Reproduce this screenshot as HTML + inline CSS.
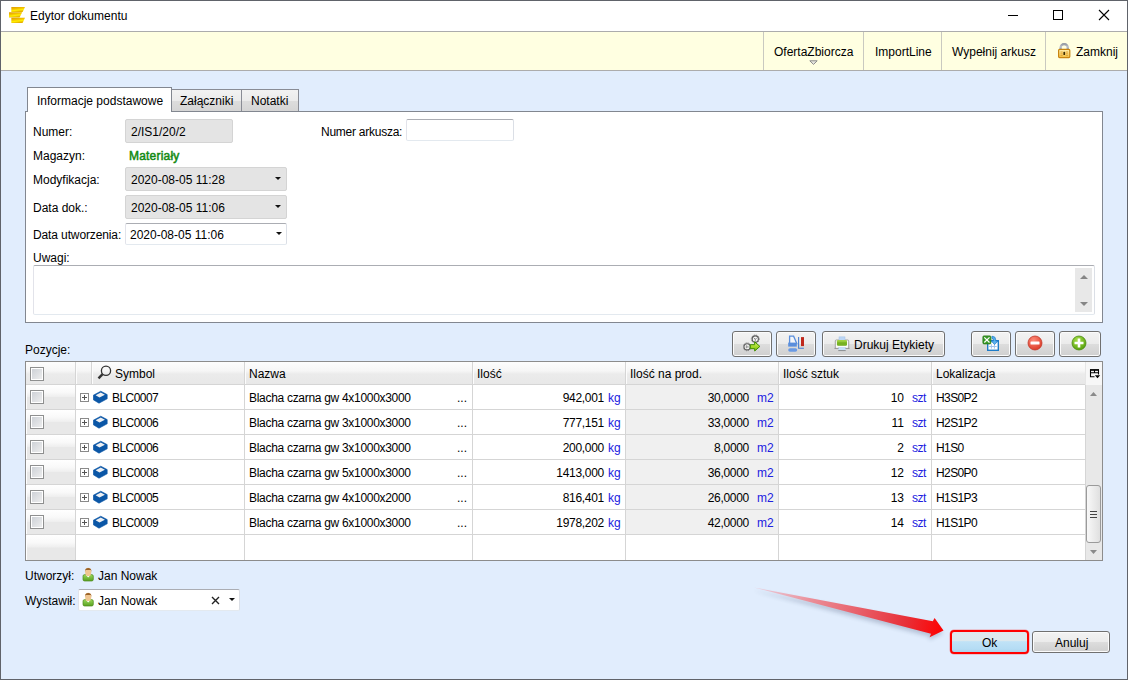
<!DOCTYPE html>
<html><head><meta charset="utf-8"><style>
*{box-sizing:border-box;margin:0;padding:0}
html,body{width:1128px;height:680px;overflow:hidden;background:#e1edfd}
body{position:relative;font-family:"Liberation Sans",sans-serif;font-size:12px;color:#000}
.a{position:absolute}
.t{position:absolute;white-space:nowrap;font-size:12px;line-height:14px;height:14px}
.r{text-align:right}
.win{left:0;top:0;width:1128px;height:680px;border:1px solid #60636a;background:#e1edfd}
.title{left:1px;top:1px;width:1126px;height:30px;background:#fff}
.tb{left:1px;top:31px;width:1126px;height:40px;background:#ffffe1;border-top:1px solid #acacac;border-bottom:1px solid #acacac}
.sep{top:32px;width:1px;height:38px;background:#c9c9c0}
.panel{left:25px;top:111px;width:1078px;height:212px;background:#fff;border:1px solid #828790}
.tabsel{left:27px;top:87px;width:145px;height:25px;background:#fff;border:1px solid #828790;border-bottom:none;z-index:2}
.tab{top:89px;height:22px;border:1px solid #898c95;border-bottom:none;background:linear-gradient(#f2f2f2 0,#ebebeb 50%,#dddddd 51%,#d5d5d5 100%)}
.ro{background:#e4e4e4;border:1px solid #d4d4d4;border-radius:2px}
.tbx{background:#fff;border:1px solid #abadb3;border-bottom-color:#e3e9ef;border-left-color:#e2e3ea;border-right-color:#dbdfe6;border-radius:2px}
.dd{width:0;height:0;border-left:3px solid transparent;border-right:3px solid transparent;border-top:3px solid #111}
.btn{border:1px solid #707070;border-radius:3px;background:linear-gradient(#f3f3f3 0,#ebebeb 50%,#dddddd 51%,#cfcfcf 100%);box-shadow:inset 0 0 0 1px #fbfbfb}
.grid{left:25px;top:361px;width:1078px;height:200px;background:#fff;border:1px solid #8c8c8c}
.hdr{background:linear-gradient(#fdfdfd 0,#f6f6f6 40%,#ebebeb 55%,#e8e8e8 100%)}
.ind{background:linear-gradient(#ffffff 0,#f9f9f9 30%,#efefef 48%,#e8e8e8 52%,#e8e8e8 100%)}
.vl{width:1px;background:#d5d5d5}
.hl{height:1px;background:#d5d5d5}
.cb{width:14px;height:14px;border:1px solid #8e8f8f;background:linear-gradient(135deg,#cbcfd5 0,#f0f0f0 100%);box-shadow:inset 0 0 0 1px #fff}
.u{color:#2020e0}
</style></head><body>
<div class="a win"></div><div class="a title"></div>
<svg class="a" style="left:6px;top:4px" width="24" height="24" viewBox="0 0 24 24">
 <defs><linearGradient id="gold" x1="0" y1="0" x2="0.35" y2="1"><stop offset="0" stop-color="#dc9a00"/><stop offset=".45" stop-color="#f5c400"/><stop offset=".7" stop-color="#fff000"/><stop offset="1" stop-color="#e6b000"/></linearGradient></defs>
 <path d="M5.3 3H19L16.6 8H5.3z" fill="url(#gold)"/>
 <path d="M3 8.3H16.2L13.6 13.4H3z" fill="url(#gold)"/>
 <path d="M5.3 13.8H19L16.6 19H5.3z" fill="url(#gold)"/>
</svg>
<div class="t" style="left:30px;top:9px;color:#000">Edytor dokumentu</div>
<div class="a " style="left:1008px;top:15px;width:10px;height:1px;background:#000"></div>
<div class="a " style="left:1053px;top:10px;width:10px;height:10px;border:1px solid #000"></div>
<svg class="a" style="left:1098px;top:9px" width="12" height="12" viewBox="0 0 12 12"><path d="M1 1L11 11M11 1L1 11" stroke="#000" stroke-width="1.1"/></svg>
<div class="a tb"></div>
<div class="a sep" style="left:763px;top:32px;width:1px;height:38px;"></div>
<div class="a sep" style="left:863px;top:32px;width:1px;height:38px;"></div>
<div class="a sep" style="left:941px;top:32px;width:1px;height:38px;"></div>
<div class="a sep" style="left:1045px;top:32px;width:1px;height:38px;"></div>
<div class="t" style="left:774px;top:45px;">OfertaZbiorcza</div>
<svg class="a" style="left:809px;top:60px" width="9" height="5" viewBox="0 0 9 5"><path d="M0.8 0.8h7.4L4.5 4.4z" fill="#e8e8e0" stroke="#8a8a8a" stroke-width="1"/></svg>
<div class="t" style="left:875px;top:45px;">ImportLine</div>
<div class="t" style="left:952px;top:45px;">Wypełnij arkusz</div>
<svg class="a" style="left:1052px;top:38px" width="24" height="24" viewBox="0 0 24 24">
 <defs><linearGradient id="shk" x1="0" y1="0" x2="0" y2="1"><stop offset="0" stop-color="#8a8f98"/><stop offset=".5" stop-color="#e8eaee"/><stop offset="1" stop-color="#6f8fc0"/></linearGradient>
 <linearGradient id="lkb" x1="0" y1="0" x2="0" y2="1"><stop offset="0" stop-color="#fff0b0"/><stop offset="1" stop-color="#f2c040"/></linearGradient></defs>
 <path d="M8.6 11.5V9.8a3.6 3.6 0 0 1 7.2 0V11.5" fill="none" stroke="url(#shk)" stroke-width="2.2"/>
 <path d="M8.6 11.5V9.8a3.6 3.6 0 0 1 7.2 0V11.5" fill="none" stroke="#a0a6b0" stroke-width="2.2" opacity="0.6"/>
 <rect x="6.6" y="11.4" width="11.2" height="8.2" rx="1" fill="url(#lkb)" stroke="#c88410" stroke-width="1.2"/>
 <path d="M8.5 14h2.2M8.5 15.8h2.2M8.5 17.6h2.2M13.8 14h2.2M13.8 15.8h2.2M13.8 17.6h2.2" stroke="#e0a030" stroke-width="0.9"/>
 <rect x="11.4" y="13.8" width="1.7" height="3.2" rx="0.6" fill="#3a2a00"/>
</svg>
<div class="t" style="left:1076px;top:45px;">Zamknij</div>
<div class="a panel"></div><div class="a tabsel"></div>
<div class="t" style="left:37px;top:94px;z-index:3">Informacje podstawowe</div>
<div class="a tab" style="left:171px;top:89px;width:71px;height:22px;"></div>
<div class="t" style="left:180px;top:94px;">Załączniki</div>
<div class="a tab" style="left:241px;top:89px;width:58px;height:22px;"></div>
<div class="t" style="left:251px;top:94px;">Notatki</div>
<div class="t" style="left:33px;top:125px;">Numer:</div>
<div class="a ro" style="left:125px;top:119px;width:108px;height:24px;"></div>
<div class="t" style="left:131px;top:125px;">2/IS1/20/2</div>
<div class="t" style="left:321px;top:125px;letter-spacing:-0.25px">Numer arkusza:</div>
<div class="a tbx" style="left:406px;top:119px;width:108px;height:22px;"></div>
<div class="t" style="left:33px;top:149px;">Magazyn:</div>
<div class="t" style="left:129px;top:149px;color:#128a12;-webkit-text-stroke:0.5px #128a12;letter-spacing:0.2px">Materiały</div>
<div class="t" style="left:33px;top:173px;">Modyfikacja:</div>
<div class="a ro" style="left:125px;top:167px;width:162px;height:24px;"></div>
<div class="t" style="left:131px;top:173px;">2020-08-05 11:28</div>
<div class="a dd" style="left:275px;top:177px;width:0px;height:0px;"></div>
<div class="t" style="left:33px;top:201px;">Data dok.:</div>
<div class="a ro" style="left:125px;top:195px;width:162px;height:24px;"></div>
<div class="t" style="left:131px;top:201px;">2020-08-05 11:06</div>
<div class="a dd" style="left:275px;top:205px;width:0px;height:0px;"></div>
<div class="t" style="left:33px;top:228px;letter-spacing:-0.12px">Data utworzenia:</div>
<div class="a tbx" style="left:125px;top:223px;width:162px;height:22px;"></div>
<div class="t" style="left:130px;top:228px;">2020-08-05 11:06</div>
<div class="a dd" style="left:276px;top:232px;width:0px;height:0px;"></div>
<div class="t" style="left:33px;top:251px;">Uwagi:</div>
<div class="a tbx" style="left:33px;top:265px;width:1062px;height:50px;"></div>
<div class="a " style="left:1075px;top:268px;width:17px;height:44px;background:#e8e8e8"></div>
<div class="a " style="left:1080px;top:275px;width:0px;height:0px;border-left:4px solid transparent;border-right:4px solid transparent;border-bottom:4px solid #858585"></div>
<div class="a " style="left:1080px;top:302px;width:0px;height:0px;border-left:4px solid transparent;border-right:4px solid transparent;border-top:4px solid #858585"></div>
<div class="t" style="left:25px;top:343px;">Pozycje:</div>
<div class="a btn" style="left:732px;top:331px;width:40px;height:26px;"></div>
<div class="a btn" style="left:776px;top:331px;width:40px;height:26px;"></div>
<div class="a btn" style="left:822px;top:331px;width:123px;height:26px;"></div>
<div class="a btn" style="left:971px;top:331px;width:40px;height:26px;"></div>
<div class="a btn" style="left:1015px;top:331px;width:40px;height:26px;"></div>
<div class="a btn" style="left:1059px;top:331px;width:42px;height:26px;"></div>
<svg class="a" style="left:743px;top:334px" width="20" height="20" viewBox="0 0 20 20">
 <defs><linearGradient id="ga" x1="0" y1="0" x2="0" y2="1"><stop offset="0" stop-color="#d8f860"/><stop offset="1" stop-color="#78c000"/></linearGradient></defs>
 <circle cx="12.3" cy="5" r="4" fill="none" stroke="#888" stroke-width="1" stroke-dasharray="1.1 1"/>
 <circle cx="12.3" cy="5" r="3.1" fill="#f6f6f6" stroke="#5a5a5a" stroke-width="1.1"/>
 <path d="M10.8 3.8l1.5 1.6 1.5-1.6M12.3 5.4v1.4" fill="none" stroke="#666" stroke-width="0.8"/>
 <circle cx="4.1" cy="12.8" r="4" fill="none" stroke="#888" stroke-width="1" stroke-dasharray="1.1 1"/>
 <circle cx="4.1" cy="12.8" r="3.1" fill="#f6f6f6" stroke="#5a5a5a" stroke-width="1.1"/>
 <path d="M3.3 11.3v3M4.9 11.8v2" stroke="#666" stroke-width="0.8"/>
 <path d="M7.3 10.7H11.7V7.8L16.9 12.4 11.7 17V14.7H7.3Z" fill="url(#ga)" stroke="#3f8c00" stroke-width="1"/>
</svg>
<svg class="a" style="left:787px;top:335px" width="20" height="18" viewBox="0 0 20 18">
 <path d="M2.6 1.2H6.6L9.8 8.6H2.6Z" fill="#f4f6fa" stroke="#5a8edc" stroke-width="1.3"/>
 <rect x="1.2" y="7.6" width="8.6" height="4" fill="#5a8edc"/>
 <rect x="1.2" y="13.2" width="9" height="3.6" rx="1.8" fill="#6a9ae4"/>
 <path d="M11.6 2.1V13.3H16.9" fill="none" stroke="#4a7fd0" stroke-width="1.1"/>
 <rect x="14" y="2.1" width="3" height="9" fill="#c0281c"/>
</svg>
<svg class="a" style="left:834px;top:336px" width="16" height="16" viewBox="0 0 16 16">
 <defs><linearGradient id="gp" x1="0" y1="0" x2="0" y2="1"><stop offset="0" stop-color="#a8d848"/><stop offset="1" stop-color="#6aa818"/></linearGradient></defs>
 <path d="M1.3 12.4V5Q1.3 4 2.3 4H13.7Q14.7 4 14.7 5V12.4" fill="#fafafa" stroke="#9a9a9a" stroke-width="0.9"/>
 <path d="M0.5 12.4H15.5" stroke="#8a8a8a" stroke-width="0.9"/>
 <rect x="5" y="0.9" width="6" height="4.6" fill="#bcd6f5" stroke="#a0c0e8" stroke-width="0.5"/>
 <rect x="2.9" y="3.9" width="10.1" height="5.9" rx="1.3" fill="url(#gp)"/>
 <path d="M3.3 7h9.4" stroke="#5a9a10" stroke-width="0.6"/>
 <rect x="4" y="11.8" width="8" height="0.9" fill="#444"/>
 <rect x="4.3" y="11.2" width="7.4" height="3.2" fill="#c6e0fa"/>
 <path d="M4.3 14.6H11.7" stroke="#777" stroke-width="0.8"/>
</svg>
<div class="t" style="left:854px;top:338px;">Drukuj Etykiety</div>
<svg class="a" style="left:982px;top:335px" width="18" height="17" viewBox="0 0 18 17">
 <rect x="5.7" y="5.7" width="10.6" height="9.6" fill="#fff" stroke="#1e7cc8" stroke-width="1.4"/>
 <path d="M9.4 9.2v4.4M12.4 9.2v4.4M7.1 11.5h7.6" stroke="#a0c4ec" stroke-width="1"/>
 <rect x="0.9" y="0.9" width="8" height="8" rx="1" fill="#3a9a28" stroke="#2a7a18" stroke-width="0.8"/>
 <path d="M2.3 2.3L7.5 7.5M7.5 2.3L2.3 7.5" stroke="#fff" stroke-width="1.2"/>
 <path d="M10 1.2Q13.8 1.2 13.8 5V6H16L12.6 9.6 9.2 6H11.4V5Q11.4 3.4 10 3.4Z" fill="#5ab0ec" stroke="#1e7cc8" stroke-width="0.7"/>
</svg>
<svg class="a" style="left:1027px;top:335px" width="16" height="16" viewBox="0 0 16 16">
 <defs><radialGradient id="rg" cx=".4" cy=".3" r=".8"><stop offset="0" stop-color="#ff8a78"/><stop offset="1" stop-color="#d8321e"/></radialGradient></defs>
 <circle cx="8" cy="8" r="7" fill="url(#rg)" stroke="#c0392b" stroke-width="0.8"/>
 <rect x="3.5" y="6.5" width="9" height="3" rx="0.5" fill="#fff"/>
</svg>
<svg class="a" style="left:1071px;top:335px" width="16" height="16" viewBox="0 0 16 16">
 <defs><radialGradient id="gg" cx=".4" cy=".3" r=".8"><stop offset="0" stop-color="#a8e04a"/><stop offset="1" stop-color="#4e9a06"/></radialGradient></defs>
 <circle cx="8" cy="8" r="7" fill="url(#gg)" stroke="#4a8a10" stroke-width="0.8"/>
 <path d="M8 3.5v9M3.5 8h9" stroke="#fff" stroke-width="2.6"/>
</svg>
<div class="a grid"></div>
<div class="a hdr" style="left:26px;top:362px;width:1059px;height:22px;"></div>
<div class="a " style="left:1085px;top:362px;width:17px;height:23px;background:#f7f7f7"></div>
<div class="a hl" style="left:26px;top:384px;width:1059px;height:1px;"></div>
<div class="a vl" style="left:75px;top:362px;width:1px;height:22px;"></div>
<div class="a " style="left:76px;top:362px;width:1px;height:22px;background:#fcfcfc"></div>
<div class="a vl" style="left:91px;top:362px;width:1px;height:22px;"></div>
<div class="a " style="left:92px;top:362px;width:1px;height:22px;background:#fcfcfc"></div>
<div class="a vl" style="left:244px;top:362px;width:1px;height:22px;"></div>
<div class="a " style="left:245px;top:362px;width:1px;height:22px;background:#fcfcfc"></div>
<div class="a vl" style="left:472px;top:362px;width:1px;height:22px;"></div>
<div class="a " style="left:473px;top:362px;width:1px;height:22px;background:#fcfcfc"></div>
<div class="a vl" style="left:625px;top:362px;width:1px;height:22px;"></div>
<div class="a " style="left:626px;top:362px;width:1px;height:22px;background:#fcfcfc"></div>
<div class="a vl" style="left:778px;top:362px;width:1px;height:22px;"></div>
<div class="a " style="left:779px;top:362px;width:1px;height:22px;background:#fcfcfc"></div>
<div class="a vl" style="left:931px;top:362px;width:1px;height:22px;"></div>
<div class="a " style="left:932px;top:362px;width:1px;height:22px;background:#fcfcfc"></div>
<div class="a " style="left:1085px;top:362px;width:1px;height:23px;background:#e6e6e6"></div>
<div class="a cb" style="left:30px;top:367px;width:14px;height:14px;"></div>
<svg class="a" style="left:96px;top:364px" width="16" height="16" viewBox="0 0 16 16">
 <circle cx="10" cy="6.8" r="4.6" fill="none" stroke="#333" stroke-width="1.3"/>
 <path d="M6.6 10.2L2.5 14.3" stroke="#333" stroke-width="2.4"/>
</svg>
<div class="t" style="left:115px;top:367px;">Symbol</div>
<div class="t" style="left:249px;top:367px;">Nazwa</div>
<div class="t" style="left:477px;top:367px;">Ilość</div>
<div class="t" style="left:630px;top:367px;">Ilość na prod.</div>
<div class="t" style="left:783px;top:367px;">Ilość sztuk</div>
<div class="t" style="left:936px;top:367px;">Lokalizacja</div>
<svg class="a" style="left:1089px;top:369px" width="12" height="11" viewBox="0 0 12 11">
 <path d="M1.5 8.2V1H9.5V5.5M1.5 3.8H9.5M5.5 1V3.8M1.5 7.7H5.5" fill="none" stroke="#000" stroke-width="1.1"/>
 <path d="M1 0.9H10" stroke="#000" stroke-width="1.5"/>
 <path d="M5.8 6.2H11.2L8.5 9.2z" fill="#000"/>
</svg>
<div class="a ind" style="left:26px;top:385px;width:49px;height:24px;"></div>
<div class="a " style="left:26px;top:385px;width:1px;height:25px;background:#fff"></div>
<div class="a " style="left:626px;top:385px;width:152px;height:24px;background:#f0f0f0"></div>
<div class="a hl" style="left:26px;top:409px;width:1059px;height:1px;"></div>
<div class="a ind" style="left:26px;top:410px;width:49px;height:24px;"></div>
<div class="a " style="left:26px;top:410px;width:1px;height:25px;background:#fff"></div>
<div class="a " style="left:626px;top:410px;width:152px;height:24px;background:#f0f0f0"></div>
<div class="a hl" style="left:26px;top:434px;width:1059px;height:1px;"></div>
<div class="a ind" style="left:26px;top:435px;width:49px;height:24px;"></div>
<div class="a " style="left:26px;top:435px;width:1px;height:25px;background:#fff"></div>
<div class="a " style="left:626px;top:435px;width:152px;height:24px;background:#f0f0f0"></div>
<div class="a hl" style="left:26px;top:459px;width:1059px;height:1px;"></div>
<div class="a ind" style="left:26px;top:460px;width:49px;height:24px;"></div>
<div class="a " style="left:26px;top:460px;width:1px;height:25px;background:#fff"></div>
<div class="a " style="left:626px;top:460px;width:152px;height:24px;background:#f0f0f0"></div>
<div class="a hl" style="left:26px;top:484px;width:1059px;height:1px;"></div>
<div class="a ind" style="left:26px;top:485px;width:49px;height:24px;"></div>
<div class="a " style="left:26px;top:485px;width:1px;height:25px;background:#fff"></div>
<div class="a " style="left:626px;top:485px;width:152px;height:24px;background:#f0f0f0"></div>
<div class="a hl" style="left:26px;top:509px;width:1059px;height:1px;"></div>
<div class="a ind" style="left:26px;top:510px;width:49px;height:24px;"></div>
<div class="a " style="left:26px;top:510px;width:1px;height:25px;background:#fff"></div>
<div class="a " style="left:626px;top:510px;width:152px;height:24px;background:#f0f0f0"></div>
<div class="a hl" style="left:26px;top:534px;width:1059px;height:1px;"></div>
<div class="a ind" style="left:26px;top:535px;width:49px;height:25px;"></div>
<div class="a " style="left:26px;top:535px;width:1px;height:25px;background:#fff"></div>
<div class="a vl" style="left:75px;top:385px;width:1px;height:175px;"></div>
<div class="a vl" style="left:244px;top:385px;width:1px;height:175px;"></div>
<div class="a vl" style="left:472px;top:385px;width:1px;height:175px;"></div>
<div class="a vl" style="left:625px;top:385px;width:1px;height:175px;"></div>
<div class="a vl" style="left:778px;top:385px;width:1px;height:175px;"></div>
<div class="a vl" style="left:931px;top:385px;width:1px;height:175px;"></div>
<div class="a vl" style="left:1085px;top:385px;width:1px;height:175px;"></div>
<div class="a cb" style="left:30px;top:390px;width:14px;height:14px;"></div>
<svg class="a" style="left:80px;top:393px" width="9" height="9" viewBox="0 0 9 9"><rect x="0.5" y="0.5" width="8" height="8" fill="#fff" stroke="#8a8a8a"/><path d="M2 4.5h5M4.5 2v5" stroke="#555"/></svg>
<svg class="a" style="left:93px;top:390px" width="15" height="14" viewBox="0 0 15 14">
 <path d="M0.3 5.2L7.8 1.2 14.2 4.6V8.8L6 13.2 0.3 9.8z" fill="#0a56a6" stroke="#0a56a6" stroke-width="0.6" stroke-linejoin="round"/>
 <path d="M2.6 5.3L7.8 2.6 11.9 4.8 6.5 7.6z" fill="#eef0f3"/>
</svg>
<div class="t" style="left:112px;top:391px;letter-spacing:-0.55px">BLC0007</div>
<div class="t" style="left:249px;top:391px;letter-spacing:-0.3px">Blacha czarna gw 4x1000x3000</div>
<div class="t" style="left:457px;top:391px;">...</div>
<div class="t" style="right:524px;top:391px;text-align:right;letter-spacing:-0.3px">942,001</div>
<div class="t u" style="left:608px;top:391px;">kg</div>
<div class="t" style="right:379px;top:391px;text-align:right;letter-spacing:-0.3px">30,0000</div>
<div class="t u" style="left:757px;top:391px;">m2</div>
<div class="t" style="right:224px;top:391px;text-align:right;">10</div>
<div class="t u" style="left:912px;top:391px;letter-spacing:-0.5px">szt</div>
<div class="t" style="left:936px;top:391px;letter-spacing:-0.6px">H3S0P2</div>
<div class="a cb" style="left:30px;top:415px;width:14px;height:14px;"></div>
<svg class="a" style="left:80px;top:418px" width="9" height="9" viewBox="0 0 9 9"><rect x="0.5" y="0.5" width="8" height="8" fill="#fff" stroke="#8a8a8a"/><path d="M2 4.5h5M4.5 2v5" stroke="#555"/></svg>
<svg class="a" style="left:93px;top:415px" width="15" height="14" viewBox="0 0 15 14">
 <path d="M0.3 5.2L7.8 1.2 14.2 4.6V8.8L6 13.2 0.3 9.8z" fill="#0a56a6" stroke="#0a56a6" stroke-width="0.6" stroke-linejoin="round"/>
 <path d="M2.6 5.3L7.8 2.6 11.9 4.8 6.5 7.6z" fill="#eef0f3"/>
</svg>
<div class="t" style="left:112px;top:416px;letter-spacing:-0.55px">BLC0006</div>
<div class="t" style="left:249px;top:416px;letter-spacing:-0.3px">Blacha czarna gw 3x1000x3000</div>
<div class="t" style="left:457px;top:416px;">...</div>
<div class="t" style="right:524px;top:416px;text-align:right;letter-spacing:-0.3px">777,151</div>
<div class="t u" style="left:608px;top:416px;">kg</div>
<div class="t" style="right:379px;top:416px;text-align:right;letter-spacing:-0.3px">33,0000</div>
<div class="t u" style="left:757px;top:416px;">m2</div>
<div class="t" style="right:224px;top:416px;text-align:right;">11</div>
<div class="t u" style="left:912px;top:416px;letter-spacing:-0.5px">szt</div>
<div class="t" style="left:936px;top:416px;letter-spacing:-0.6px">H2S1P2</div>
<div class="a cb" style="left:30px;top:440px;width:14px;height:14px;"></div>
<svg class="a" style="left:80px;top:443px" width="9" height="9" viewBox="0 0 9 9"><rect x="0.5" y="0.5" width="8" height="8" fill="#fff" stroke="#8a8a8a"/><path d="M2 4.5h5M4.5 2v5" stroke="#555"/></svg>
<svg class="a" style="left:93px;top:440px" width="15" height="14" viewBox="0 0 15 14">
 <path d="M0.3 5.2L7.8 1.2 14.2 4.6V8.8L6 13.2 0.3 9.8z" fill="#0a56a6" stroke="#0a56a6" stroke-width="0.6" stroke-linejoin="round"/>
 <path d="M2.6 5.3L7.8 2.6 11.9 4.8 6.5 7.6z" fill="#eef0f3"/>
</svg>
<div class="t" style="left:112px;top:441px;letter-spacing:-0.55px">BLC0006</div>
<div class="t" style="left:249px;top:441px;letter-spacing:-0.3px">Blacha czarna gw 3x1000x3000</div>
<div class="t" style="left:457px;top:441px;">...</div>
<div class="t" style="right:524px;top:441px;text-align:right;letter-spacing:-0.3px">200,000</div>
<div class="t u" style="left:608px;top:441px;">kg</div>
<div class="t" style="right:379px;top:441px;text-align:right;letter-spacing:-0.3px">8,0000</div>
<div class="t u" style="left:757px;top:441px;">m2</div>
<div class="t" style="right:224px;top:441px;text-align:right;">2</div>
<div class="t u" style="left:912px;top:441px;letter-spacing:-0.5px">szt</div>
<div class="t" style="left:936px;top:441px;letter-spacing:-0.6px">H1S0</div>
<div class="a cb" style="left:30px;top:465px;width:14px;height:14px;"></div>
<svg class="a" style="left:80px;top:468px" width="9" height="9" viewBox="0 0 9 9"><rect x="0.5" y="0.5" width="8" height="8" fill="#fff" stroke="#8a8a8a"/><path d="M2 4.5h5M4.5 2v5" stroke="#555"/></svg>
<svg class="a" style="left:93px;top:465px" width="15" height="14" viewBox="0 0 15 14">
 <path d="M0.3 5.2L7.8 1.2 14.2 4.6V8.8L6 13.2 0.3 9.8z" fill="#0a56a6" stroke="#0a56a6" stroke-width="0.6" stroke-linejoin="round"/>
 <path d="M2.6 5.3L7.8 2.6 11.9 4.8 6.5 7.6z" fill="#eef0f3"/>
</svg>
<div class="t" style="left:112px;top:466px;letter-spacing:-0.55px">BLC0008</div>
<div class="t" style="left:249px;top:466px;letter-spacing:-0.3px">Blacha czarna gw 5x1000x3000</div>
<div class="t" style="left:457px;top:466px;">...</div>
<div class="t" style="right:524px;top:466px;text-align:right;letter-spacing:-0.3px">1413,000</div>
<div class="t u" style="left:608px;top:466px;">kg</div>
<div class="t" style="right:379px;top:466px;text-align:right;letter-spacing:-0.3px">36,0000</div>
<div class="t u" style="left:757px;top:466px;">m2</div>
<div class="t" style="right:224px;top:466px;text-align:right;">12</div>
<div class="t u" style="left:912px;top:466px;letter-spacing:-0.5px">szt</div>
<div class="t" style="left:936px;top:466px;letter-spacing:-0.6px">H2S0P0</div>
<div class="a cb" style="left:30px;top:490px;width:14px;height:14px;"></div>
<svg class="a" style="left:80px;top:493px" width="9" height="9" viewBox="0 0 9 9"><rect x="0.5" y="0.5" width="8" height="8" fill="#fff" stroke="#8a8a8a"/><path d="M2 4.5h5M4.5 2v5" stroke="#555"/></svg>
<svg class="a" style="left:93px;top:490px" width="15" height="14" viewBox="0 0 15 14">
 <path d="M0.3 5.2L7.8 1.2 14.2 4.6V8.8L6 13.2 0.3 9.8z" fill="#0a56a6" stroke="#0a56a6" stroke-width="0.6" stroke-linejoin="round"/>
 <path d="M2.6 5.3L7.8 2.6 11.9 4.8 6.5 7.6z" fill="#eef0f3"/>
</svg>
<div class="t" style="left:112px;top:491px;letter-spacing:-0.55px">BLC0005</div>
<div class="t" style="left:249px;top:491px;letter-spacing:-0.3px">Blacha czarna gw 4x1000x2000</div>
<div class="t" style="left:457px;top:491px;">...</div>
<div class="t" style="right:524px;top:491px;text-align:right;letter-spacing:-0.3px">816,401</div>
<div class="t u" style="left:608px;top:491px;">kg</div>
<div class="t" style="right:379px;top:491px;text-align:right;letter-spacing:-0.3px">26,0000</div>
<div class="t u" style="left:757px;top:491px;">m2</div>
<div class="t" style="right:224px;top:491px;text-align:right;">13</div>
<div class="t u" style="left:912px;top:491px;letter-spacing:-0.5px">szt</div>
<div class="t" style="left:936px;top:491px;letter-spacing:-0.6px">H1S1P3</div>
<div class="a cb" style="left:30px;top:515px;width:14px;height:14px;"></div>
<svg class="a" style="left:80px;top:518px" width="9" height="9" viewBox="0 0 9 9"><rect x="0.5" y="0.5" width="8" height="8" fill="#fff" stroke="#8a8a8a"/><path d="M2 4.5h5M4.5 2v5" stroke="#555"/></svg>
<svg class="a" style="left:93px;top:515px" width="15" height="14" viewBox="0 0 15 14">
 <path d="M0.3 5.2L7.8 1.2 14.2 4.6V8.8L6 13.2 0.3 9.8z" fill="#0a56a6" stroke="#0a56a6" stroke-width="0.6" stroke-linejoin="round"/>
 <path d="M2.6 5.3L7.8 2.6 11.9 4.8 6.5 7.6z" fill="#eef0f3"/>
</svg>
<div class="t" style="left:112px;top:516px;letter-spacing:-0.55px">BLC0009</div>
<div class="t" style="left:249px;top:516px;letter-spacing:-0.3px">Blacha czarna gw 6x1000x3000</div>
<div class="t" style="left:457px;top:516px;">...</div>
<div class="t" style="right:524px;top:516px;text-align:right;letter-spacing:-0.3px">1978,202</div>
<div class="t u" style="left:608px;top:516px;">kg</div>
<div class="t" style="right:379px;top:516px;text-align:right;letter-spacing:-0.3px">42,0000</div>
<div class="t u" style="left:757px;top:516px;">m2</div>
<div class="t" style="right:224px;top:516px;text-align:right;">14</div>
<div class="t u" style="left:912px;top:516px;letter-spacing:-0.5px">szt</div>
<div class="t" style="left:936px;top:516px;letter-spacing:-0.6px">H1S1P0</div>
<div class="a " style="left:1086px;top:385px;width:16px;height:175px;background:#e8e8e8"></div>
<svg class="a" style="left:1089px;top:391px" width="9" height="6" viewBox="0 0 9 6"><path d="M1 5H8L4.5 1z" fill="#8a8a8a"/></svg>
<div class="a " style="left:1086px;top:485px;width:15px;height:58px;border:1px solid #9a9a9a;border-radius:3px;background:linear-gradient(90deg,#f8f8f8,#e0e0e0)"></div>
<div class="a " style="left:1090px;top:511px;width:7px;height:1px;background:#444"></div>
<div class="a " style="left:1090px;top:514px;width:7px;height:1px;background:#444"></div>
<div class="a " style="left:1090px;top:517px;width:7px;height:1px;background:#444"></div>
<svg class="a" style="left:1089px;top:549px" width="9" height="6" viewBox="0 0 9 6"><path d="M1 1H8L4.5 5z" fill="#8a8a8a"/></svg>
<div class="t" style="left:25px;top:569px;">Utworzył:</div>
<svg class="a" style="left:82px;top:567px" width="12" height="15" viewBox="0 0 12 15">
 <defs><linearGradient id="pg82567" x1="0" y1="0" x2="0" y2="1"><stop offset="0" stop-color="#9ad85a"/><stop offset="1" stop-color="#58a020"/></linearGradient></defs>
 <rect x="1" y="7.6" width="10.3" height="6.4" rx="1.6" fill="url(#pg82567)" stroke="#4d8a1c" stroke-width="0.7"/>
 <path d="M4 8l2.2 2.4 2.2-2.4z" fill="#fff"/>
 <ellipse cx="6.2" cy="4.9" rx="3.1" ry="4.2" fill="#efc690"/>
 <path d="M3 4.8C2.4 -0.2 10 -0.2 9.4 4.8L8.8 2.9 3.6 2.9z" fill="#9a6228"/>
</svg>
<div class="t" style="left:98px;top:569px;">Jan Nowak</div>
<div class="t" style="left:25px;top:594px;">Wystawił:</div>
<div class="a tbx" style="left:78px;top:589px;width:162px;height:22px;"></div>
<svg class="a" style="left:82px;top:592px" width="12" height="15" viewBox="0 0 12 15">
 <defs><linearGradient id="pg82592" x1="0" y1="0" x2="0" y2="1"><stop offset="0" stop-color="#9ad85a"/><stop offset="1" stop-color="#58a020"/></linearGradient></defs>
 <rect x="1" y="7.6" width="10.3" height="6.4" rx="1.6" fill="url(#pg82592)" stroke="#4d8a1c" stroke-width="0.7"/>
 <path d="M4 8l2.2 2.4 2.2-2.4z" fill="#fff"/>
 <ellipse cx="6.2" cy="4.9" rx="3.1" ry="4.2" fill="#efc690"/>
 <path d="M3 4.8C2.4 -0.2 10 -0.2 9.4 4.8L8.8 2.9 3.6 2.9z" fill="#9a6228"/>
</svg>
<div class="t" style="left:98px;top:594px;">Jan Nowak</div>
<svg class="a" style="left:211px;top:596px" width="9" height="9" viewBox="0 0 9 9"><path d="M1 1l7 7M8 1L1 8" stroke="#222" stroke-width="1.4"/></svg>
<div class="a dd" style="left:229px;top:598px;width:0px;height:0px;"></div>
<svg class="a" style="left:740px;top:580px" width="220" height="70" viewBox="0 0 220 70">
 <defs>
  <linearGradient id="ar" gradientUnits="userSpaceOnUse" x1="14" y1="7" x2="204" y2="50"><stop offset="0" stop-color="#f4b0bc" stop-opacity="0.5"/><stop offset=".3" stop-color="#eb8e98"/><stop offset=".55" stop-color="#e8606a"/><stop offset=".8" stop-color="#e83038"/><stop offset="1" stop-color="#ff0000"/></linearGradient>
  <filter id="sh" x="-10%" y="-50%" width="130%" height="200%"><feGaussianBlur stdDeviation="2"/></filter>
 </defs>
 <path d="M13.7 7.4L192.8 41.3 194.6 38.1 203.5 50.5 189.6 57.2 191 53.8z" fill="#1a2a50" opacity="0.22" filter="url(#sh)" transform="translate(-1,3)"/>
 <path d="M13.7 7.4L192.8 41.3 194.6 38.1 203.5 50.5 189.6 57.2 191 53.8z" fill="url(#ar)"/>
</svg>
<div class="a " style="left:950px;top:630px;width:79px;height:24px;border:2px solid #ff0000;border-radius:4px;box-shadow:0 0 0 0.5px rgba(255,0,0,.35);background:linear-gradient(#dfe8ed 0,#dce8ee 45%,#c0e2f7 48%,#b5dcf4 85%,#a9d3ec 100%)"></div>
<div class="t" style="left:982px;top:636px;">Ok</div>
<div class="a btn" style="left:1032px;top:631px;width:78px;height:22px;"></div>
<div class="t" style="left:1055px;top:636px;">Anuluj</div>
</body></html>
